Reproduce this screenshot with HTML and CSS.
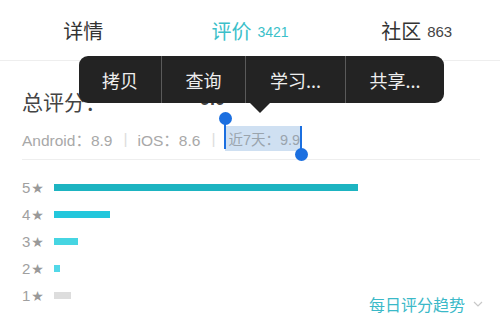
FILE: index.html
```html
<!DOCTYPE html>
<html lang="zh">
<head>
<meta charset="utf-8">
<link rel="stylesheet" href="styles.css">
</head>
<body>
<div class="page">
  <nav class="tabs">
    <div class="tab">详情</div>
    <div class="tab active">评价 <span class="count">3421</span></div>
    <div class="tab">社区 <span class="count">863</span></div>
  </nav>
  <section class="content">
    <div class="score-row">
      <span class="score-label">总评分：</span>
      <span class="score-value">9.0</span>
    </div>
    <div class="sub-row">
      <span>Android：8.9</span><span class="sep">|</span><span>iOS：8.6</span><span class="sep">|</span><span class="selected"><i class="handle start"></i>近7天：9.9<i class="handle end"></i></span>
    </div>
    <div class="bars-area">
      <div class="bars">
        <div class="bar-row"><span class="lbl">5<b>★</b></span><span class="bar b5" style="width:304px"></span></div>
        <div class="bar-row"><span class="lbl">4<b>★</b></span><span class="bar b4" style="width:56px"></span></div>
        <div class="bar-row"><span class="lbl">3<b>★</b></span><span class="bar b3" style="width:24px"></span></div>
        <div class="bar-row"><span class="lbl">2<b>★</b></span><span class="bar b2" style="width:6px"></span></div>
        <div class="bar-row"><span class="lbl">1<b>★</b></span><span class="bar b1" style="width:17px"></span></div>
      </div>
      <div class="trend">每日评分趋势 <svg class="chev" width="10" height="6" viewBox="0 0 10 6"><path d="M1 1 L5 5 L9 1" fill="none" stroke="#c8c8c8" stroke-width="1.2"/></svg></div>
    </div>
  </section>
  <div class="menu">
    <div class="menu-item w1">拷贝</div>
    <div class="menu-item w2">查询</div>
    <div class="menu-item w3">学习...</div>
    <div class="menu-item w4">共享...</div>
    <span class="arrow"></span>
  </div>
</div>
</body>
</html>
```
FILE: styles.css
```css
html, body {
  margin: 0;
  padding: 0;
  background: #fff;
}
.page {
  position: relative;
  width: 500px;
  height: 328px;
  overflow: hidden;
  font-family: "Noto Sans CJK SC", "Liberation Sans", sans-serif;
  color: #333;
}
.tabs {
  display: flex;
  height: 60px;
  border-bottom: 1px solid #eeeeee;
}
.tab {
  flex: 1;
  display: flex;
  align-items: center;
  justify-content: center;
  font-size: 20px;
  color: #333;
  gap: 6px;
}
.tab .count {
  font-family: "Liberation Sans", sans-serif;
  font-size: 15px;
  color: #444;
  margin-top: 3px;
}
.tab.active, .tab.active .count {
  color: #3bbfc9;
}
.tab.active .count {
  font-size: 14px;
}
.content {
  padding: 0 20px 0 22px;
}
.score-row {
  display: flex;
  align-items: center;
  height: 57px;
  padding-top: 22px;
  box-sizing: border-box;
}
.score-label {
  font-size: 21px;
  color: #444;
  width: 178px;
}
.score-value {
  font-family: "Liberation Sans", sans-serif;
  font-size: 18px;
  font-weight: bold;
  color: #444;
  margin-top: -2px;
}
.sub-row {
  display: flex;
  align-items: center;
  height: 41px;
  border-bottom: 1px solid #eeeeee;
  font-family: "Liberation Sans", "Noto Sans CJK SC", sans-serif;
  font-size: 15.5px;
  color: #a8a8a8;
}
.sep {
  color: #dddddd;
  margin: 0 10px 0 11px;
}
.selected {
  position: relative;
  background: #cfe0f2;
  color: #9aa4ad;
  font-size: 14.5px;
  padding: 2px 1px 2px 3px;
  margin-left: 0;
}
.handle {
  position: absolute;
  width: 2px;
  background: #1b6fe0;
}
.handle::after {
  content: "";
  position: absolute;
  left: -5px;
  width: 13px;
  height: 13px;
  border-radius: 50%;
  background: #1b6fe0;
}
.handle.start {
  left: -1px;
  top: -3px;
  height: 26px;
}
.handle.start::after {
  top: -11px;
}
.handle.end {
  right: -1px;
  top: 0;
  height: 24px;
}
.handle.end::after {
  bottom: -11px;
}
.bars-area {
  display: flex;
  justify-content: space-between;
  align-items: flex-end;
  padding-top: 14px;
}
.bars {
  display: flex;
  flex-direction: column;
}
.bar-row {
  display: flex;
  align-items: center;
  height: 27px;
}
.lbl {
  width: 32px;
  font-family: "Liberation Sans", sans-serif;
  font-size: 15px;
  color: #a0a0a0;
}
.lbl b {
  font-family: "DejaVu Sans", sans-serif;
  font-weight: normal;
  font-size: 14px;
  color: #999;
  margin-left: 1px;
}
.bar {
  display: block;
  height: 7px;
}
.b5 { background: #1db4c1; }
.b4 { background: #22c7dc; }
.b3 { background: #46d5e2; }
.b2 { background: #52d8e8; }
.b1 { background: #dddddd; }
.trend {
  display: flex;
  align-items: center;
  gap: 8px;
  font-size: 16px;
  color: #3bb9c8;
  margin-bottom: -7px;
  margin-right: -3px;
}
.menu {
  position: absolute;
  left: 79px;
  top: 56px;
  height: 47px;
  display: flex;
  background: #232323;
  border-radius: 9px;
}
.menu-item {
  display: flex;
  align-items: center;
  justify-content: center;
  color: #eeeeee;
  font-size: 18px;
  border-left: 1px solid #5a5a5a;
}
.menu-item.w1 { width: 82px; border-left: none; }
.menu-item.w2 { width: 83px; }
.menu-item.w3 { width: 99px; }
.menu-item.w4 { width: 98px; }
.arrow {
  position: absolute;
  left: 171px;
  top: 47px;
  width: 0;
  height: 0;
  border-left: 10px solid transparent;
  border-right: 10px solid transparent;
  border-top: 10px solid #232323;
}
```
